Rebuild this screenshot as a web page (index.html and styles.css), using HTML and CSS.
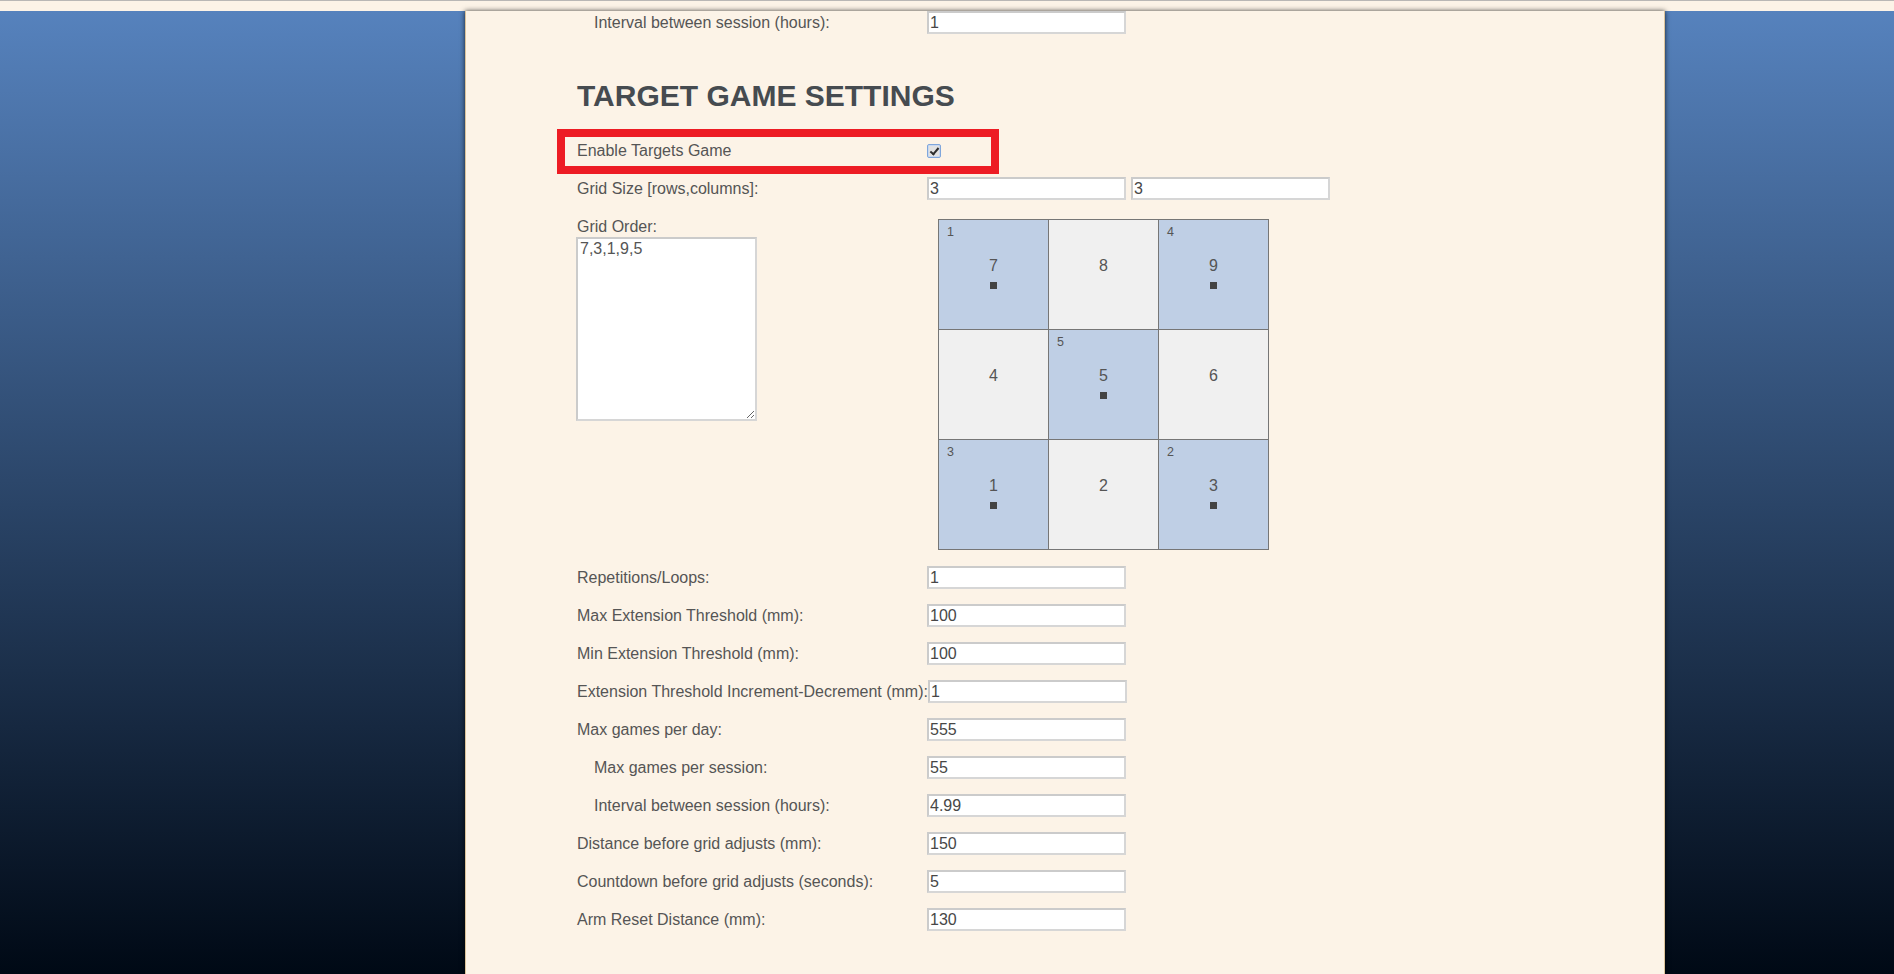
FILE: index.html
```html
<!DOCTYPE html>
<html lang="en">
<head>
<meta charset="utf-8">
<title>Target Game Settings</title>
<link rel="stylesheet" href="styles.css">
</head>
<body>
<div class="topbar"></div>
<div class="page">
  <aside class="side side-left"></aside>
  <main class="main">
    <div class="row row-first">
      <label class="lbl indent">Interval between session (hours):</label>
      <input class="field" type="text" value="1">
    </div>

    <h2 class="heading">TARGET GAME SETTINGS</h2>

    <div class="row row-highlight">
      <label class="lbl">Enable Targets Game</label>
      <input class="check" type="checkbox" checked>
    </div>

    <div class="row">
      <label class="lbl">Grid Size [rows,columns]:</label>
      <input class="field" type="text" value="3">
      <input class="field field-next" type="text" value="3">
    </div>

    <div class="grid-section">
      <div class="order-col">
        <label class="order-lbl">Grid Order:</label>
        <textarea class="order">7,3,1,9,5</textarea>
      </div>
      <div class="board">
        <div class="cell on"><span class="idx">1</span><span class="num">7</span><span class="dot"></span></div>
        <div class="cell"><span class="num">8</span><span class="dot"></span></div>
        <div class="cell on"><span class="idx">4</span><span class="num">9</span><span class="dot"></span></div>
        <div class="cell"><span class="num">4</span><span class="dot"></span></div>
        <div class="cell on"><span class="idx">5</span><span class="num">5</span><span class="dot"></span></div>
        <div class="cell"><span class="num">6</span><span class="dot"></span></div>
        <div class="cell on"><span class="idx">3</span><span class="num">1</span><span class="dot"></span></div>
        <div class="cell"><span class="num">2</span><span class="dot"></span></div>
        <div class="cell on"><span class="idx">2</span><span class="num">3</span><span class="dot"></span></div>
      </div>
    </div>

    <div class="row">
      <label class="lbl">Repetitions/Loops:</label>
      <input class="field" type="text" value="1">
    </div>
    <div class="row">
      <label class="lbl">Max Extension Threshold (mm):</label>
      <input class="field" type="text" value="100">
    </div>
    <div class="row">
      <label class="lbl">Min Extension Threshold (mm):</label>
      <input class="field" type="text" value="100">
    </div>
    <div class="row">
      <label class="lbl">Extension Threshold Increment-Decrement (mm):</label>
      <input class="field" type="text" value="1">
    </div>
    <div class="row">
      <label class="lbl">Max games per day:</label>
      <input class="field" type="text" value="555">
    </div>
    <div class="row">
      <label class="lbl indent">Max games per session:</label>
      <input class="field" type="text" value="55">
    </div>
    <div class="row">
      <label class="lbl indent">Interval between session (hours):</label>
      <input class="field" type="text" value="4.99">
    </div>
    <div class="row">
      <label class="lbl">Distance before grid adjusts (mm):</label>
      <input class="field" type="text" value="150">
    </div>
    <div class="row">
      <label class="lbl">Countdown before grid adjusts (seconds):</label>
      <input class="field" type="text" value="5">
    </div>
    <div class="row">
      <label class="lbl">Arm Reset Distance (mm):</label>
      <input class="field" type="text" value="130">
    </div>
  </main>
  <aside class="side side-right"></aside>
</div>
</body>
</html>
```

FILE: styles.css
```css
html, body {
  margin: 0;
  padding: 0;
  height: 100%;
}

body {
  background: #fcf3e7;
  font-family: "Liberation Sans", Arial, sans-serif;
  font-size: 16px;
  color: #555;
  overflow: hidden;
}

.topbar {
  height: 10px;
  border-top: 1px solid #b9b7b5;
  background: #fcf3e7;
}

.page {
  display: flex;
  height: calc(100vh - 11px);
}

.side {
  background: linear-gradient(to bottom, #5682bd 0%, #000915 100%);
}

.side-left {
  flex: 0 0 465px;
}

.side-right {
  flex: 1 1 auto;
}

.main {
  flex: 0 0 1200px;
  box-sizing: border-box;
  border-left: 1px solid #dcc39a;
  border-right: 1px solid #dcc39a;
  background: #fcf3e7;
  box-shadow: 0 0 5px rgba(0, 0, 0, 0.75);
  position: relative;
  z-index: 1;
  padding-left: 111px;
  overflow: hidden;
}

.row {
  display: flex;
  align-items: center;
  min-height: 23px;
  padding: 7px 0 8px;
}

.row-first {
  padding-top: 0;
}

.lbl {
  flex: 0 0 350px;
  box-sizing: border-box;
  white-space: nowrap;
  line-height: 18px;
  color: #555;
}

.indent {
  padding-left: 17px;
}

.field {
  box-sizing: border-box;
  width: 199px;
  height: 23px;
  margin: 0;
  padding: 0 1px;
  border: 2px solid #d6d6d6;
  border-top-color: #cbcbcb;
  border-left-color: #cbcbcb;
  background: #fff;
  font-family: "Liberation Sans", Arial, sans-serif;
  font-size: 16px;
  color: #474747;
  outline: none;
}

.field-next {
  margin-left: 5px;
}

.heading {
  margin: 37px 0 19px;
  font-size: 30px;
  line-height: 34px;
  font-weight: bold;
  color: #464b50;
}

.row-highlight {
  position: relative;
}

.row-highlight::before {
  content: "";
  position: absolute;
  left: -20px;
  top: -3px;
  width: 442px;
  height: 45px;
  box-sizing: border-box;
  border: 8px solid #ed1c24;
  pointer-events: none;
}

.check {
  -webkit-appearance: none;
  appearance: none;
  position: relative;
  width: 14px;
  height: 14px;
  margin: 0;
  box-sizing: border-box;
  border: 1px solid #7fa6dc;
  border-radius: 2px;
  background: #e2e2e2;
  box-shadow: inset 0 0 0 1px #c9d8ef;
}

.check::after {
  content: "";
  position: absolute;
  left: 4px;
  top: 1px;
  width: 3px;
  height: 7px;
  border: solid #2e2e2e;
  border-width: 0 2.5px 2.5px 0;
  transform: rotate(40deg);
}

.grid-section {
  display: flex;
  align-items: flex-start;
  padding-top: 10px;
  margin-bottom: 9px;
}

.order-col {
  flex: 0 0 350px;
  display: flex;
  flex-direction: column;
  align-items: flex-start;
}

.order-lbl {
  line-height: 18px;
  color: #555;
}

.order {
  box-sizing: border-box;
  width: 181px;
  height: 184px;
  margin: 1px 0 0 -1px;
  padding: 1px 2px;
  border: 2px solid #d6d6d6;
  border-top-color: #cbcbcb;
  border-left-color: #cbcbcb;
  background: #fff;
  font-family: "Liberation Sans", Arial, sans-serif;
  font-size: 16px;
  line-height: 18px;
  color: #555;
  outline: none;
}

.board {
  display: grid;
  grid-template-columns: repeat(3, 109px);
  grid-auto-rows: 109px;
  gap: 1px;
  padding: 1px;
  background: #767676;
  margin: 1px 0 0 11px;
}

.cell {
  position: relative;
  display: flex;
  flex-direction: column;
  align-items: center;
  justify-content: center;
  padding-bottom: 3px;
  box-sizing: border-box;
  background: #f0f0f0;
}

.cell.on {
  background: #bfcfe5;
}

.idx {
  position: absolute;
  top: 5px;
  left: 8px;
  font-size: 12.5px;
  line-height: 14px;
  color: #555;
}

.num {
  font-size: 16px;
  line-height: 18px;
  color: #555;
}

.dot {
  width: 7px;
  height: 7px;
  margin-top: 7px;
  background: #444;
  visibility: hidden;
}

.cell.on .dot {
  visibility: visible;
}
```
